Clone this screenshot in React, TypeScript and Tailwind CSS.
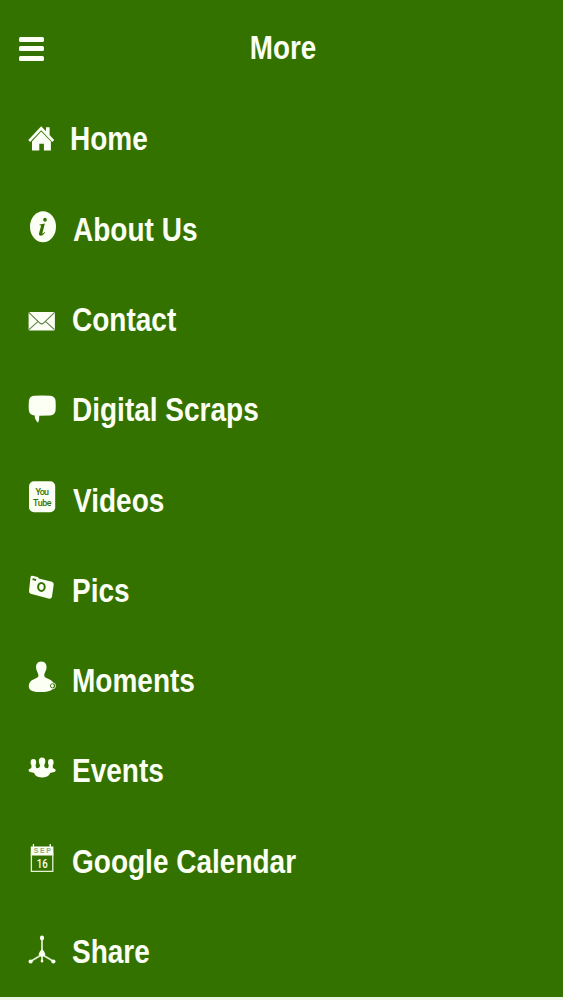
import type { ReactNode } from "react";

const GREEN = "#347200";

interface IconProps {
  children: ReactNode;
}

const Icon = ({ children }: IconProps) => (
  <svg width="30" height="36" viewBox="0 0 30 36" fill="#fbfff4" className="shrink-0 overflow-visible">
    {children}
  </svg>
);

const HomeIcon = () => (
  <Icon>
    <path d="M13.2 5.2 18 10.3V6.2h3.6v7.9l4.6 4.9-1.9 2L13.2 9.3 2.1 21 .3 19z" />
    <path d="M13.2 10.6 22.9 20.6v8.9h-7v-6.8h-4.6v6.8H4v-8.9z" />
  </Icon>
);

const InfoIcon = () => (
  <Icon>
    <ellipse cx="15" cy="15.7" rx="13" ry="15.5" />
    <g fill={GREEN}>
      <ellipse cx="17" cy="8.8" rx="1.8" ry="2" />
      <path d="m11.6 13.4 5.3-.9-2.5 9.5c-.2 1 .5.8 2-1l.6.5c-1.7 2.5-3 3.3-4.5 3.2-1.5-.2-1.8-1.2-1.3-2.9l1.7-6.4c.2-.9-.1-1.2-1.5-1.2z" />
    </g>
  </Icon>
);

const MailIcon = () => (
  <Icon>
    <rect x="0.6" y="11" width="26.3" height="18.4" rx="1" />
    <path d="m.8 11.3 10.8 10.5q2.1 2 4.2 0L26.7 11.3M1 28.6l9.1-8.2M26.5 28.6l-9.1-8.2" fill="none" stroke="#5d8047" strokeWidth="1.1" />
  </Icon>
);

const ChatIcon = () => (
  <Icon>
    <path d="M6 3.8q8-.8 16.2 0 5.2.5 5.4 5.5.3 4.5 0 9-.4 4.8-5.5 5.2l-10.8.2q0 4.5-1.2 7-3.4-2.7-3.4-7.2Q1.5 23.2.9 18.5q-.5-4.8 0-9.5Q1.4 4.2 6 3.8" />
  </Icon>
);

const YouTubeIcon = () => (
  <Icon>
    <rect x="1" y="-0.7" width="26.2" height="31" rx="5" />
    <g fill={GREEN} fontFamily="Roboto, sans-serif" fontSize="8.9" fontWeight="500" textAnchor="middle">
      <text x="14.2" y="12.7" textLength="13.5" lengthAdjust="spacing">You</text>
      <text x="14.3" y="23.5" textLength="18.5" lengthAdjust="spacing">Tube</text>
    </g>
  </Icon>
);

const CameraIcon = () => (
  <Icon>
    <path d="m4.2 3.8 5.5 1.1 1.2 1.7 12.9 3.2q2.1.7 1.9 3L23.9 25q-.6 2-2.6 1.8L2.7 21.7Q.8 21 1 19L2.5 5.2q.3-1.5 1.7-1.4" />
    <path d="m4.7 6.2 3.6.9-.3 1.9-3.6-.9z" fill={GREEN} />
    <ellipse cx="13.4" cy="14.9" rx="3.3" ry="4" fill="none" stroke={GREEN} strokeWidth="2" />
  </Icon>
);

const PersonIcon = () => (
  <Icon>
    <path d="M13.3-.6c3.7 0 5.6 2.8 5.2 6.7-.3 3.2-2.1 4.8-2.3 6.9-.1 2.2 1.2 2.7 4 3.8 3.8 1.5 5.6 3.8 5.6 7 0 4.7-5.3 6.3-12.5 6.3S.8 28.6.8 24.4c0-3.8 2.2-6 6-7.6 2.6-1.1 3.8-1.7 3.6-3.8-.2-2.1-2-3.7-2.3-6.9-.4-3.9 1.5-6.7 5.2-6.7" />
    <circle cx="24.5" cy="23.8" r="2.2" fill="none" stroke={GREEN} strokeWidth="1" />
    <circle cx="24.5" cy="23.8" r="3.1" fill="none" stroke="#fbfff4" strokeWidth="0.8" />
    <circle cx="24.5" cy="23.8" r="1" />
  </Icon>
);

const GroupIcon = () => (
  <Icon>
    <ellipse cx="5.4" cy="9.5" rx="2.8" ry="3.4" />
    <ellipse cx="22.8" cy="9.5" rx="2.8" ry="3.4" />
    <path d="M3.7 11h3.4l1.2 4 2.6 1v5L2 18.9q-2-.4-1.3-2.4l2.6-1.6zM21.1 11h3.4l.4 3.9 2.6 1.6q.8 2-1.2 2.4L17.5 21v-5l2.6-1z" />
    <path d="M14.1 4.6c2.5 0 3.5 1.9 3.2 4.2-.2 1.8-1.1 2.7-1.1 4.2 0 1.7 1.8 1.8 4 2.9 2.3 1.1 2.4 4.2 1 5.8-1.4 1.9-3.9 2.7-7.1 2.7s-5.7-.8-7.1-2.7c-1.4-1.6-1.3-4.7 1-5.8 2.2-1.1 4-1.2 4-2.9 0-1.5-.9-2.4-1.1-4.2-.3-2.3.7-4.2 3.2-4.2" />
  </Icon>
);

const CalendarIcon = () => (
  <Icon>
    <path d="M2.8 3.4h2V.9h1.3v2.5h15.5V.9h1.3v2.5h2.5v9H2.8z" />
    <path d="M3.4 10v18.4h21.4V10" fill="none" stroke="#e5f2d4" strokeWidth="1.3" />
    <text x="14.3" y="10.2" textAnchor="middle" fill="#8fac78" fontFamily="'Liberation Sans', sans-serif" fontSize="7" letterSpacing="-0.2">S E P</text>
    <text x="14.2" y="25" textAnchor="middle" fontFamily="Roboto, sans-serif" fontWeight="500" fontSize="12" textLength="11" lengthAdjust="spacingAndGlyphs">16</text>
  </Icon>
);

const ShareIcon = () => (
  <Icon>
    <path d="M14 5v16.5L2.5 28.4M14 21.5l11.8 6.9M14 21v7" fill="none" stroke="#e3f0d2" strokeWidth="1.7" />
    <ellipse cx="14" cy="5" rx="2.1" ry="2.4" />
    <path d="M14 16.2q2.6 1.6 3.4 5-1.2 2.6-3.4 2.6t-3.4-2.6q.8-3.4 3.4-5" />
    <ellipse cx="14" cy="28" rx="1.3" ry="1.5" />
    <ellipse cx="2.6" cy="28.6" rx="2.1" ry="2" />
    <ellipse cx="25.4" cy="28.6" rx="2.1" ry="2" />
  </Icon>
);

const items = [
  { label: "Home", icon: <HomeIcon />, gap: "ml-[12px]" },
  { label: "About Us", icon: <InfoIcon />, gap: "ml-[14.5px]" },
  { label: "Contact", icon: <MailIcon />, gap: "ml-[14px]" },
  { label: "Digital Scraps", icon: <ChatIcon />, gap: "ml-[14px]" },
  { label: "Videos", icon: <YouTubeIcon />, gap: "ml-[14.5px]" },
  { label: "Pics", icon: <CameraIcon />, gap: "ml-[14px]" },
  { label: "Moments", icon: <PersonIcon />, gap: "ml-[14px]" },
  { label: "Events", icon: <GroupIcon />, gap: "ml-[14px]" },
  { label: "Google Calendar", icon: <CalendarIcon />, gap: "ml-[14px]" },
  { label: "Share", icon: <ShareIcon />, gap: "ml-[14px]" },
];

export default function App() {
  return (
    <div className="flex h-[1000px] w-[563px] flex-col overflow-hidden border-b-[3px] border-[#eef5e6] bg-[#347200] font-['Liberation_Sans',Arial,sans-serif] font-bold text-[#fbfff4]">
      {/* Header */}
      <header className="grid h-[93.5px] shrink-0 grid-cols-[1fr_auto_1fr] items-center pr-[15px] pl-[19px]">
        <button className="flex w-[25px] flex-col gap-[4.5px] pt-1" aria-label="Menu">
          <span className="h-[5px] w-full rounded-[1.5px] bg-current" />
          <span className="h-[5px] w-full rounded-[1.5px] bg-current" />
          <span className="h-[5px] w-full rounded-[1.5px] bg-current" />
        </button>
        <h1 className="scale-x-[0.83] pt-px text-[33.5px] leading-none">More</h1>
      </header>

      {/* Menu */}
      <nav className="flex flex-col">
        {items.map((item) => (
          <a key={item.label} className="flex h-[90.3px] items-center pl-[28px]">
            {item.icon}
            <span className={`origin-left scale-x-[0.836] pt-px text-[33.5px] leading-none whitespace-nowrap ${item.gap}`}>
              {item.label}
            </span>
          </a>
        ))}
      </nav>
    </div>
  );
}
